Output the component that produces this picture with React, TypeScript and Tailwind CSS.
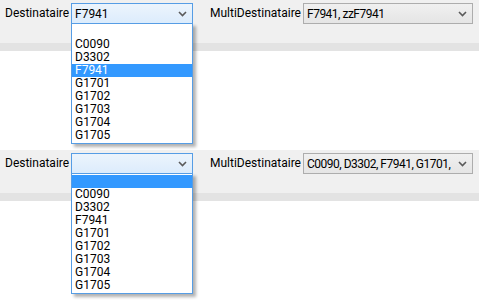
import React from 'react';

const codes = ['', 'C0090', 'D3302', 'F7941', 'G1701', 'G1702', 'G1703', 'G1704', 'G1705'];

const Chevron = () => (
  <svg width="9" height="6" viewBox="0 0 9 6" className="shrink-0">
    <path d="M1 1 L4.5 4.5 L8 1" fill="none" stroke="#5a5a5a" strokeWidth="1.6" />
  </svg>
);

interface PanelProps {
  value: string;
  multiValue: string;
  selected: string;
}

const Panel: React.FC<PanelProps> = ({ value, multiValue, selected }) => (
  <div className="relative h-[150px]">
    <div className="h-[43px] bg-[#f0f0f0] flex items-start pt-[3px]">
      <span className="w-[71px] pl-[5px] leading-[21px]">Destinataire</span>
      <div className="w-[122px] h-[21px] border border-[#569de5] bg-gradient-to-b from-[#ecf4fc] to-[#dcecfc] flex items-center pl-[3px] pr-[5px]">
        <span className="flex-1 truncate">{value}</span>
        <Chevron />
      </div>
      <span className="ml-[17px] w-[93px] leading-[21px]">MultiDestinataire</span>
      <div className="w-[170px] h-[21px] border border-[#adadad] bg-gradient-to-b from-[#f0f0f0] to-[#e5e5e5] flex items-center pl-[3px] pr-[5px]">
        <span className="flex-1 overflow-hidden whitespace-nowrap tracking-[-0.5px]">{multiValue}</span>
        <Chevron />
      </div>
    </div>
    <div className="h-[8px] bg-[#e3e3e3]" />

    <div className="absolute left-[71px] top-[23px] w-[122px] border border-[#569de5] bg-white py-px shadow-[3px_3px_3px_rgba(0,0,0,0.3)]">
      {codes.map((c) => (
        <div
          key={c || 'blank'}
          className={`h-[13px] leading-[13px] pl-[3px] ${c === selected ? 'bg-[#3399ff] text-white' : ''}`}
        >
          {c}
        </div>
      ))}
    </div>
  </div>
);

export default function App() {
  return (
    <div className="w-[479px] h-[300px] bg-white overflow-hidden text-[12px] text-black font-['Roboto','Liberation_Sans',Arial,sans-serif]">
      <Panel value="F7941" multiValue="F7941, zzF7941" selected="F7941" />
      <Panel value="" multiValue="C0090, D3302, F7941, G1701," selected="" />
    </div>
  );
}
